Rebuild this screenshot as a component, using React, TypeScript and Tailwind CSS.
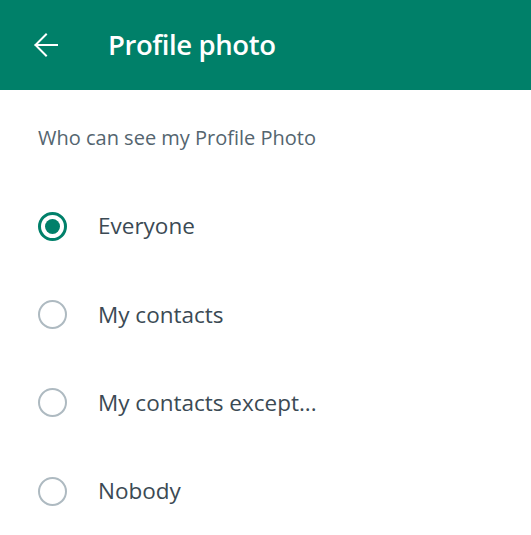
import { useState } from "react";

const OPTIONS = ["Everyone", "My contacts", "My contacts except...", "Nobody"];

export default function App() {
  const [choice, setChoice] = useState("Everyone");

  return (
    <div
      className="h-[535px] w-[531px] bg-white"
      style={{ fontFamily: '"Open Sans", "Noto Sans", sans-serif' }}
    >
      {/* Header bar */}
      <header className="flex h-[90px] items-center bg-[#008069] pl-[34px] text-white">
        <button type="button" aria-label="Back" className="flex h-[24px] w-[24px] items-center justify-center">
          <svg width="24" height="24" viewBox="0 0 24 24" fill="none">
            <path
              d="M23 12H1.5M12 1.5L1.5 12 12 22.5"
              stroke="currentColor"
              strokeWidth="2"
              strokeLinecap="square"
            />
          </svg>
        </button>
        <h1 className="ml-[50px] text-[27.5px] font-semibold tracking-[-0.015em]">Profile photo</h1>
      </header>

      <div className="pl-[38px] pt-[34px] text-[20px] leading-[28px] text-[#54656f]">
        Who can see my Profile Photo
      </div>

      <div className="mt-[30px] flex flex-col">
        {OPTIONS.map((o) => {
          const active = choice === o;
          return (
            <label
              key={o}
              className="flex h-[88.3px] cursor-pointer items-center pl-[38px]"
              onClick={() => setChoice(o)}
            >
              <span
                className={`flex h-[29px] w-[29px] items-center justify-center rounded-full ${
                  active ? "border-[3px] border-[#00806a]" : "border-[2.5px] border-[#aebac1]"
                }`}
              >
                {active && <span className="h-[15px] w-[15px] rounded-full bg-[#00806a]" />}
              </span>
              <span className="ml-[31px] text-[22.5px] text-[#3b4a54]">{o}</span>
            </label>
          );
        })}
      </div>
    </div>
  );
}
